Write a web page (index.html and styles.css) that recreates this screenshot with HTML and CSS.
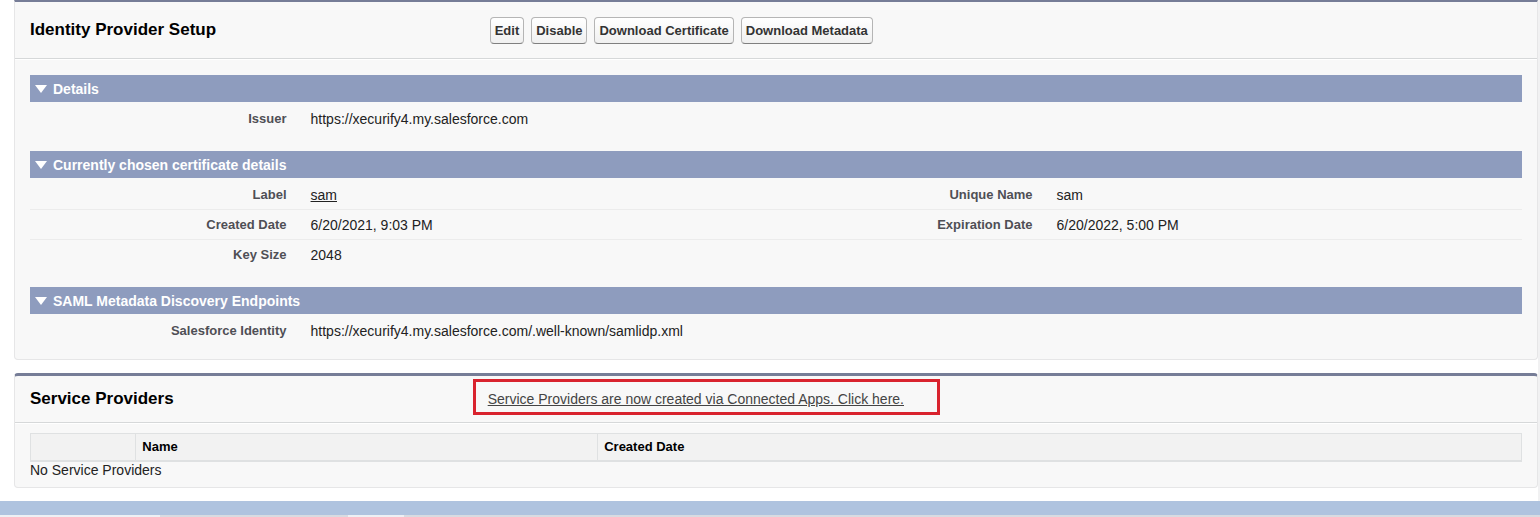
FILE: index.html
```
<!DOCTYPE html>
<html lang="en">
<head>
    <meta charset="UTF-8">
    <meta name="viewport" content="width=device-width, initial-scale=1.0">
    <title>Identity Provider</title>
    <link rel="stylesheet" href="styles.css">
</head>
<body>
    <main class="content">
        <section class="panel panel-first">
            <div class="panel-head">
                <h1>Identity Provider Setup</h1>
                <div class="button-group">
                    <button type="button">Edit</button>
                    <button type="button">Disable</button>
                    <button type="button">Download Certificate</button>
                    <button type="button">Download Metadata</button>
                </div>
            </div>
            <div class="panel-body">
                <h2 class="section-bar"><svg class="arrow" viewBox="0 0 12 8"><path d="M0 0H12L6 8Z"/></svg>Details</h2>
                <table class="detail">
                    <tr>
                        <th scope="row">Issuer</th>
                        <td>https://xecurify4.my.salesforce.com</td>
                        <td colspan="2"></td>
                    </tr>
                </table>

                <h2 class="section-bar"><svg class="arrow" viewBox="0 0 12 8"><path d="M0 0H12L6 8Z"/></svg>Currently chosen certificate details</h2>
                <table class="detail">
                    <tr>
                        <th scope="row">Label</th>
                        <td><a href="#">sam</a></td>
                        <th scope="row">Unique Name</th>
                        <td>sam</td>
                    </tr>
                    <tr>
                        <th scope="row">Created Date</th>
                        <td>6/20/2021, 9:03 PM</td>
                        <th scope="row">Expiration Date</th>
                        <td>6/20/2022, 5:00 PM</td>
                    </tr>
                    <tr>
                        <th scope="row">Key Size</th>
                        <td>2048</td>
                        <td colspan="2"></td>
                    </tr>
                </table>

                <h2 class="section-bar"><svg class="arrow" viewBox="0 0 12 8"><path d="M0 0H12L6 8Z"/></svg>SAML Metadata Discovery Endpoints</h2>
                <table class="detail">
                    <tr>
                        <th scope="row">Salesforce Identity</th>
                        <td colspan="3">https://xecurify4.my.salesforce.com/.well-known/samlidp.xml</td>
                    </tr>
                </table>
            </div>
        </section>

        <section class="panel panel-list">
            <div class="panel-head">
                <h1>Service Providers</h1>
                <div class="highlight">
                    <a href="#">Service Providers are now created via Connected Apps. Click here.</a>
                </div>
            </div>
            <div class="panel-body">
                <table class="list">
                    <thead>
                        <tr>
                            <th class="col-action"></th>
                            <th class="col-name" scope="col">Name</th>
                            <th scope="col">Created Date</th>
                        </tr>
                    </thead>
                </table>
                <p class="empty">No Service Providers</p>
            </div>
        </section>
    </main>
    <footer class="footer">
        <div class="footer-tab tab-wide"></div>
        <div class="footer-tab tab-small"></div>
    </footer>
</body>
</html>
```

FILE: styles.css
```
* {
    box-sizing: border-box;
}

body {
    margin: 0;
    background-color: #d8dbe1;
    font-family: "Liberation Sans", Arial, sans-serif;
    font-size: 14px;
    line-height: 18px;
    color: #222;
}

.content {
    padding: 0 0 13px 14px;
    background-color: #fff;
    border-right: 2px solid #f1f1f2;
}

.panel {
    margin-bottom: 13px;
    background-color: #f8f8f8;
    border: 1px solid #e6e6e7;
    border-top: 3px solid #767d97;
    border-radius: 4px;
}

.panel:last-child {
    margin-bottom: 0;
}

.panel-first {
    border-top-width: 2px;
    border-top-left-radius: 0;
    border-top-right-radius: 0;
}

.panel-head {
    display: flex;
    align-items: center;
    height: 57px;
    padding: 0 15px;
    border-bottom: 1px solid #d6d8d9;
    box-shadow: 0 1px 0 #fff;
}

.panel-list .panel-head {
    height: 47px;
}

.panel-head h1 {
    flex: none;
    width: 29%;
    margin: 0;
    font-size: 17px;
    line-height: 20px;
    color: #000;
}

.button-group {
    display: flex;
    gap: 7px;
    margin-left: 27px;
}

button {
    height: 27px;
    padding: 0 4px;
    border: 1px solid #b5b5b5;
    border-bottom-color: #7f7f7f;
    border-radius: 4px;
    background: linear-gradient(#fff, #f0f0f0);
    font-family: inherit;
    font-size: 13px;
    font-weight: bold;
    color: #333;
    cursor: pointer;
}

a {
    color: #222;
    text-decoration: underline;
}

.panel-body {
    padding: 16px 15px 13px;
}

.section-bar {
    display: flex;
    align-items: center;
    gap: 6px;
    height: 27px;
    margin: 17px 0 2px;
    padding: 0 5px;
    background-color: #8e9cbe;
    font-size: 14px;
    color: #fff;
}

.section-bar:first-child {
    margin-top: 0;
}

.arrow {
    width: 12px;
    height: 8px;
    fill: #fff;
}

.detail {
    width: 100%;
    table-layout: fixed;
    border-collapse: separate;
    border-spacing: 0;
}

.detail th,
.detail td {
    height: 30px;
    padding: 0 12px;
    border-bottom: 1px solid #ececec;
    text-align: left;
    color: #222;
}

.detail th {
    width: 18%;
    text-align: right;
    font-size: 13px;
    color: #4f4f55;
}

.detail tr:last-child th,
.detail tr:last-child td {
    border-bottom-color: transparent;
}

.highlight {
    margin: 0 0 4px 10px;
    padding: 8px 33px 4px 12px;
    border: 3px solid #d9232e;
}

.highlight a {
    color: #444;
}

.panel-list .panel-body {
    padding: 10px 15px 8px;
}

.list {
    width: 100%;
    table-layout: fixed;
    border: 1px solid #dfe1e2;
    border-bottom-width: 2px;
    border-spacing: 0;
    background-color: #f2f2f2;
}

.list th {
    height: 26px;
    padding: 0 6px;
    border-left: 1px solid #dfe1e2;
    text-align: left;
    font-size: 13px;
    color: #000;
}

.list th:first-child {
    border-left: none;
}

.col-action {
    width: 7%;
}

.col-name {
    width: 31%;
}

.empty {
    margin: 0;
    line-height: 17px;
}

.footer {
    display: flex;
    gap: 188px;
    border-top: 14px solid #afc3df;
}

.footer-tab {
    height: 2px;
    background-color: #eef0f4;
}

.tab-wide {
    width: 160px;
}

.tab-small {
    width: 56px;
}
```
